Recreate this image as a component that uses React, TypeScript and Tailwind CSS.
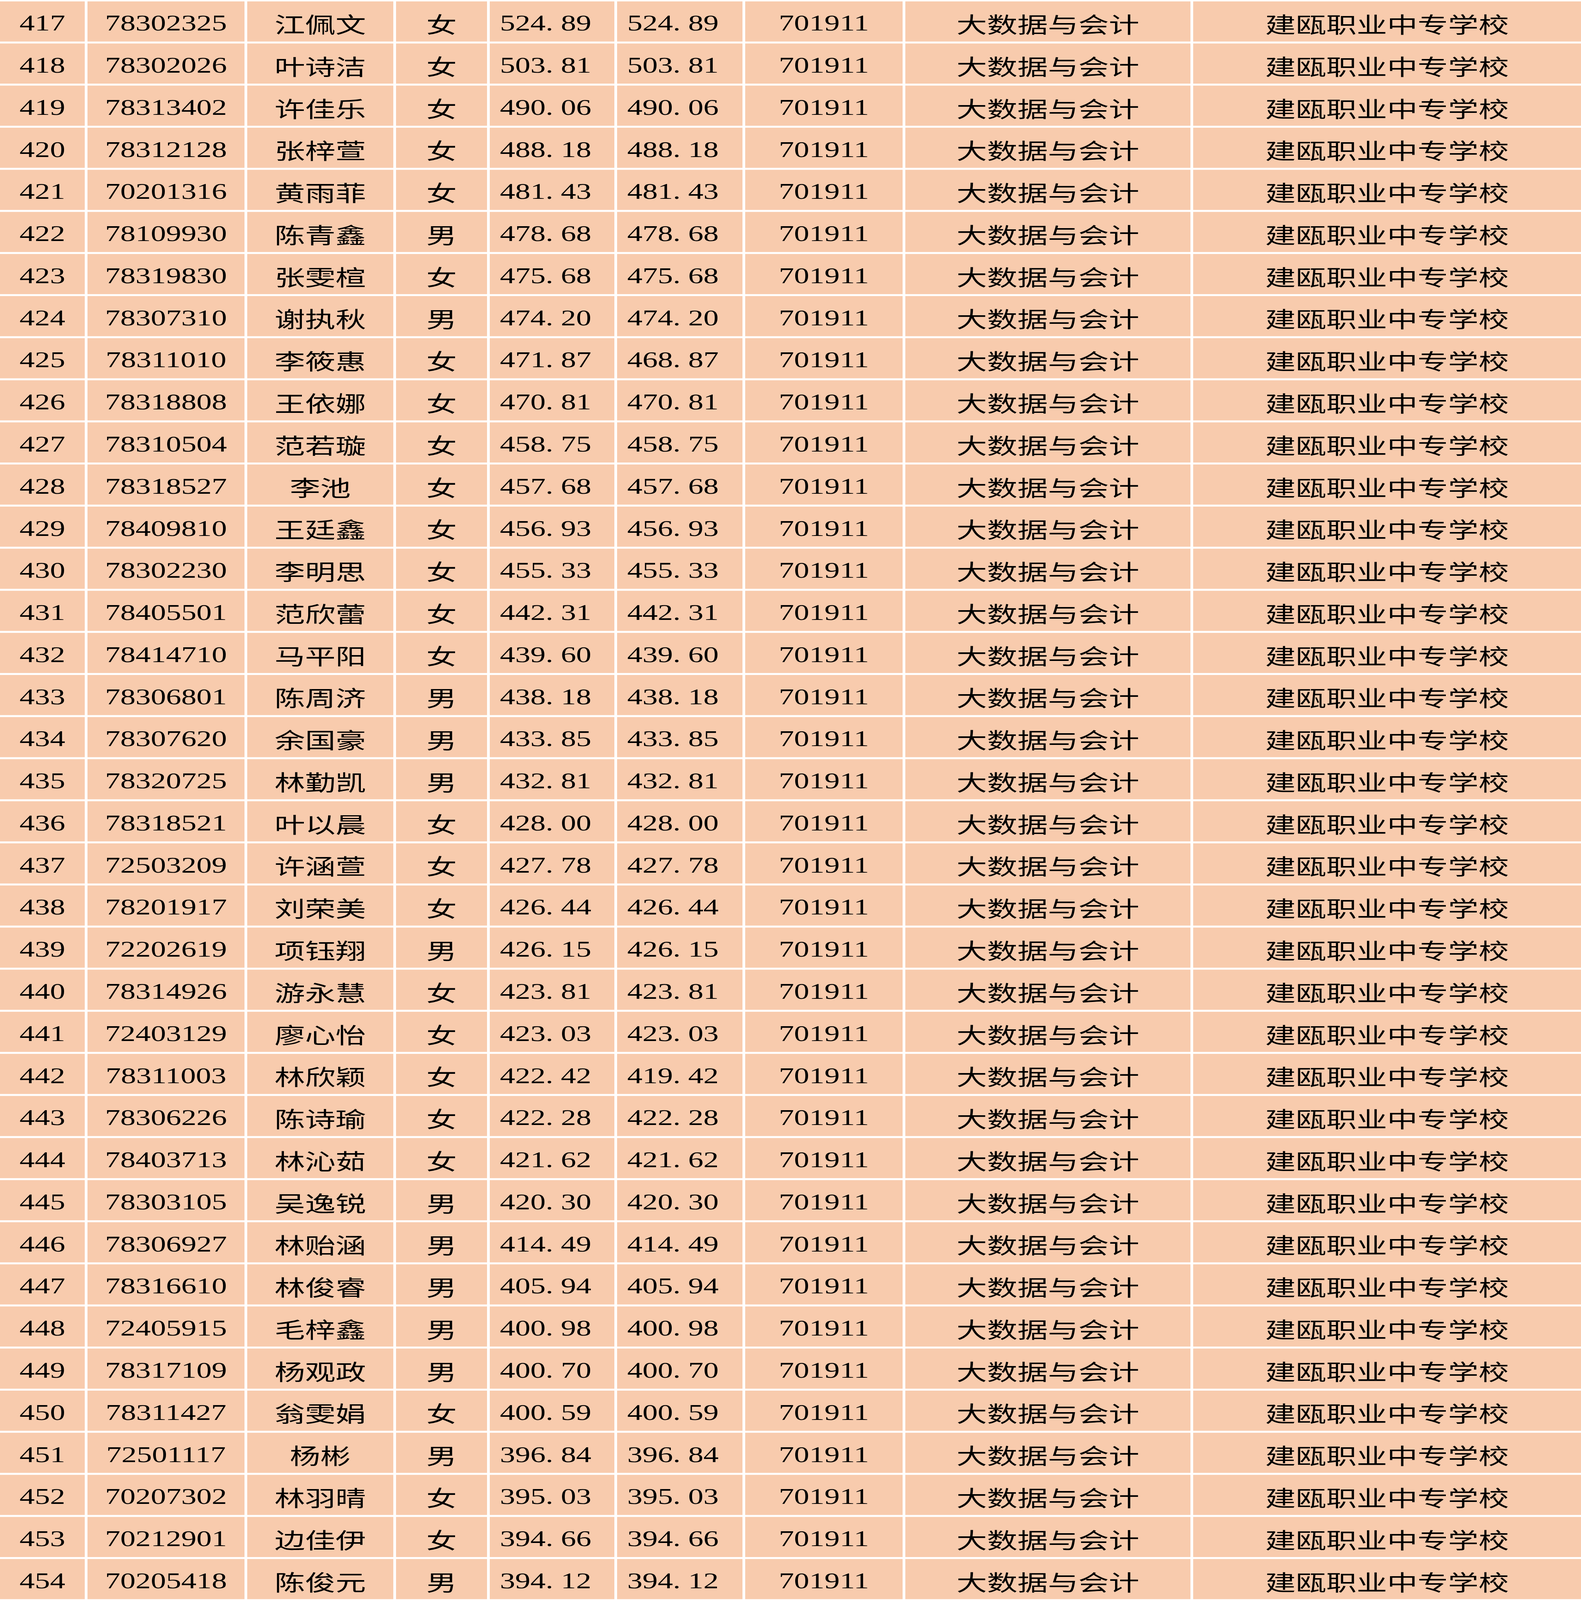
import { useEffect, useState } from "react"

type Row = [number, string, string, string, string, string]

const rows: Row[] = [
  [417, "78302325", "江佩文", "女", "524.89", "524.89"],
  [418, "78302026", "叶诗洁", "女", "503.81", "503.81"],
  [419, "78313402", "许佳乐", "女", "490.06", "490.06"],
  [420, "78312128", "张梓萱", "女", "488.18", "488.18"],
  [421, "70201316", "黄雨菲", "女", "481.43", "481.43"],
  [422, "78109930", "陈青鑫", "男", "478.68", "478.68"],
  [423, "78319830", "张雯楦", "女", "475.68", "475.68"],
  [424, "78307310", "谢执秋", "男", "474.20", "474.20"],
  [425, "78311010", "李筱惠", "女", "471.87", "468.87"],
  [426, "78318808", "王依娜", "女", "470.81", "470.81"],
  [427, "78310504", "范若璇", "女", "458.75", "458.75"],
  [428, "78318527", "李池", "女", "457.68", "457.68"],
  [429, "78409810", "王廷鑫", "女", "456.93", "456.93"],
  [430, "78302230", "李明思", "女", "455.33", "455.33"],
  [431, "78405501", "范欣蕾", "女", "442.31", "442.31"],
  [432, "78414710", "马平阳", "女", "439.60", "439.60"],
  [433, "78306801", "陈周济", "男", "438.18", "438.18"],
  [434, "78307620", "余国豪", "男", "433.85", "433.85"],
  [435, "78320725", "林勤凯", "男", "432.81", "432.81"],
  [436, "78318521", "叶以晨", "女", "428.00", "428.00"],
  [437, "72503209", "许涵萱", "女", "427.78", "427.78"],
  [438, "78201917", "刘荣美", "女", "426.44", "426.44"],
  [439, "72202619", "项钰翔", "男", "426.15", "426.15"],
  [440, "78314926", "游永慧", "女", "423.81", "423.81"],
  [441, "72403129", "廖心怡", "女", "423.03", "423.03"],
  [442, "78311003", "林欣颖", "女", "422.42", "419.42"],
  [443, "78306226", "陈诗瑜", "女", "422.28", "422.28"],
  [444, "78403713", "林沁茹", "女", "421.62", "421.62"],
  [445, "78303105", "吴逸锐", "男", "420.30", "420.30"],
  [446, "78306927", "林贻涵", "男", "414.49", "414.49"],
  [447, "78316610", "林俊睿", "男", "405.94", "405.94"],
  [448, "72405915", "毛梓鑫", "男", "400.98", "400.98"],
  [449, "78317109", "杨观政", "男", "400.70", "400.70"],
  [450, "78311427", "翁雯娟", "女", "400.59", "400.59"],
  [451, "72501117", "杨彬", "男", "396.84", "396.84"],
  [452, "70207302", "林羽晴", "女", "395.03", "395.03"],
  [453, "70212901", "边佳伊", "女", "394.66", "394.66"],
  [454, "70205418", "陈俊元", "男", "394.12", "394.12"],
]

// sheet is laid out at its natural size, then squeezed to fit the window height
const SHEET_HEIGHT = 5701

const num = "font-['Liberation_Serif','Noto_Sans_CJK_SC',serif]"
const cjk = "font-['Noto_Sans_CJK_SC',sans-serif]"

function Cell({ children, className = "" }: { children: React.ReactNode; className?: string }) {
  return (
    <div className={`flex h-[143px] items-center bg-[#f8cbad] pt-[13px] text-[78px] leading-none text-black ${className}`}>
      {children}
    </div>
  )
}

function Score({ value }: { value: string }) {
  const [a, b] = value.split(".")
  return (
    <Cell className={`${num} justify-start pl-[26px]`}>
      {a}
      <span className="inline-block w-[0.5em]">.</span>
      {b}
    </Cell>
  )
}

export default function App() {
  const [scale, setScale] = useState(1)

  useEffect(() => {
    const fit = () => setScale(Math.min(1, window.innerHeight / SHEET_HEIGHT))
    fit()
    window.addEventListener("resize", fit)
    return () => window.removeEventListener("resize", fit)
  }, [])

  return (
    <div className="h-screen overflow-hidden bg-white">
      <div className="origin-top pt-[5px]" style={{ transform: `scaleY(${scale})` }}>
        <div className="grid grid-cols-[217px_402px_374px_233px_319px_321px_403px_730px_993px] gap-[7px]">
          {rows.map((r) => (
            <div key={r[0]} className="contents">
              <Cell className={`${num} justify-center`}>{r[0]}</Cell>
              <Cell className={`${num} justify-center`}>{r[1]}</Cell>
              <Cell className={`${cjk} justify-center`}>{r[2]}</Cell>
              <Cell className={`${cjk} justify-center`}>{r[3]}</Cell>
              <Score value={r[4]} />
              <Score value={r[5]} />
              <Cell className={`${num} justify-center`}>701911</Cell>
              <Cell className={`${cjk} justify-center`}>大数据与会计</Cell>
              <Cell className={`${cjk} justify-center`}>建瓯职业中专学校</Cell>
            </div>
          ))}
        </div>
      </div>
    </div>
  )
}
